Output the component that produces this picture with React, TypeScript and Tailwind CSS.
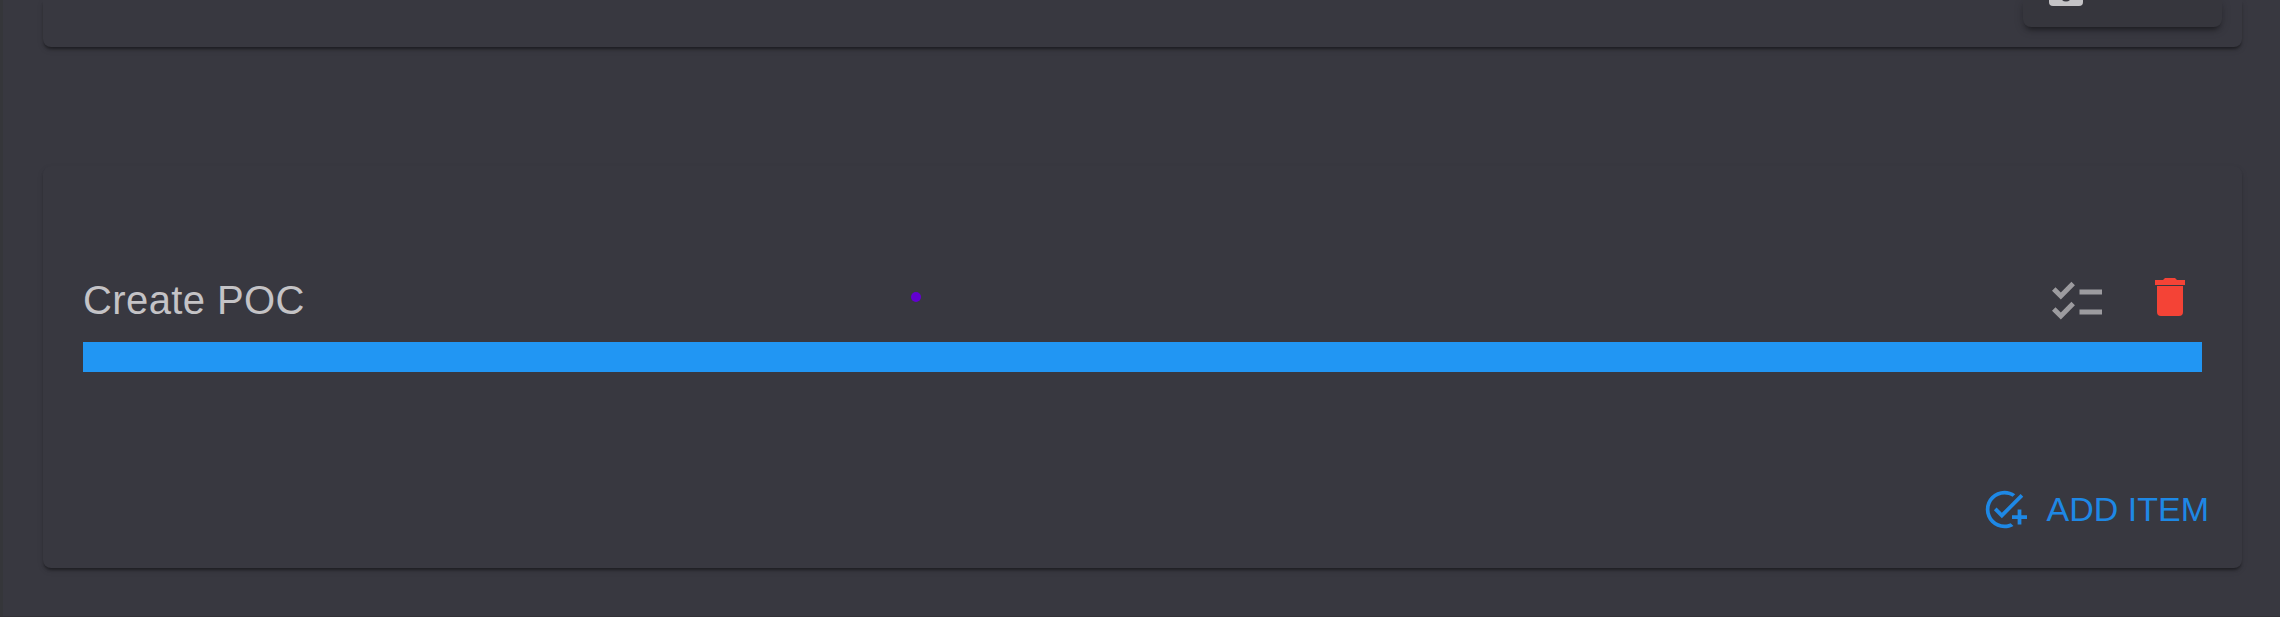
export default function App() {
  return (
    <div className="h-[617px] w-full overflow-hidden border-b border-[#323137] bg-[#383840] font-['Liberation_Sans',Arial,sans-serif]">
      <div className="h-full border-l-3 border-[#35363a] pr-[38px] pl-[40px]">
        <section className="flex h-[47px] justify-end rounded-b-[8px] bg-[#383840] pr-[20px] shadow-[0_3px_3px_-1px_rgba(0,0,0,0.4),0_3px_6px_rgba(0,0,0,0.12)]">
          <button className="flex h-[27px] w-[199px] items-start overflow-hidden rounded-b-[8px] bg-[#36363d] pl-[26px] shadow-[0_5px_5px_-3px_rgba(0,0,0,0.4),0_3px_10px_rgba(0,0,0,0.2)]">
            <svg className="-mt-[44px] h-[50px] w-[34px] shrink-0" viewBox="0 0 34 50">
              <rect x="0" y="15" width="34" height="35" rx="4" fill="#c4c3c6" />
              <circle cx="17" cy="39.4" r="6.1" fill="#36363d" />
            </svg>
          </button>
        </section>
        <section className="mt-[119px] flex h-[402px] flex-col rounded-[8px] bg-[#383840] pr-[33px] pl-[40px] shadow-[0_3px_3px_-1px_rgba(0,0,0,0.4),0_3px_6px_rgba(0,0,0,0.1)]">
          <div className="flex h-[176px] items-start pt-[105px] pr-[24px]">
            <h2 className="grow text-[40px] leading-[58px] tracking-[0.4px] text-[#c4c3c6]">Create POC</h2>
            <span className="mt-[21px] mr-[1126px] size-[10px] rounded-full bg-[#6200d0]" />
            <svg className="mt-px mr-[48px] size-[60px] shrink-0" viewBox="0 0 24 24" fill="#9c9b9f">
              <path d="M22 7h-9v2h9V7zm0 8h-9v2h9v-2zM5.54 11L2 7.46l1.41-1.41 2.12 2.12 4.24-4.24 1.41 1.41L5.54 11zm0 8L2 15.46l1.41-1.41 2.12 2.12 4.24-4.24 1.41 1.41L5.54 19z" />
            </svg>
            <svg className="mt-[7px] h-[38px] w-[30px] shrink-0" viewBox="0 0 30 38" fill="#f44336">
              <path d="M0 2h8l2-2h10l2 2h8v5H0zM2 8h26v26a4 4 0 0 1-4 4H6a4 4 0 0 1-4-4z" />
            </svg>
          </div>
          <div className="mr-[7px] h-[30px] bg-[#2196f3]" />
          <button className="mt-[114px] flex h-[46px] items-center justify-end text-[34px] leading-[46px] text-[#1e88e5]">
            <svg className="mr-[20px] size-[45px]" viewBox="0 0 24 24" fill="currentColor">
              <path d="M22 5.18L10.59 16.6l-4.24-4.24 1.41-1.41 2.83 2.83 10-10L22 5.18zM12 20c-4.41 0-8-3.59-8-8s3.59-8 8-8c1.57 0 3.04.46 4.28 1.25l1.45-1.45C16.1 2.67 14.13 2 12 2 6.48 2 2 6.48 2 12s4.48 10 10 10c1.73 0 3.36-.44 4.78-1.22l-1.5-1.5c-1 .46-2.11.72-3.28.72zm7-5h-3v2h3v3h2v-3h3v-2h-3v-3h-2v3z" />
            </svg>
            <span>ADD ITEM</span>
          </button>
        </section>
      </div>
    </div>
  );
}
